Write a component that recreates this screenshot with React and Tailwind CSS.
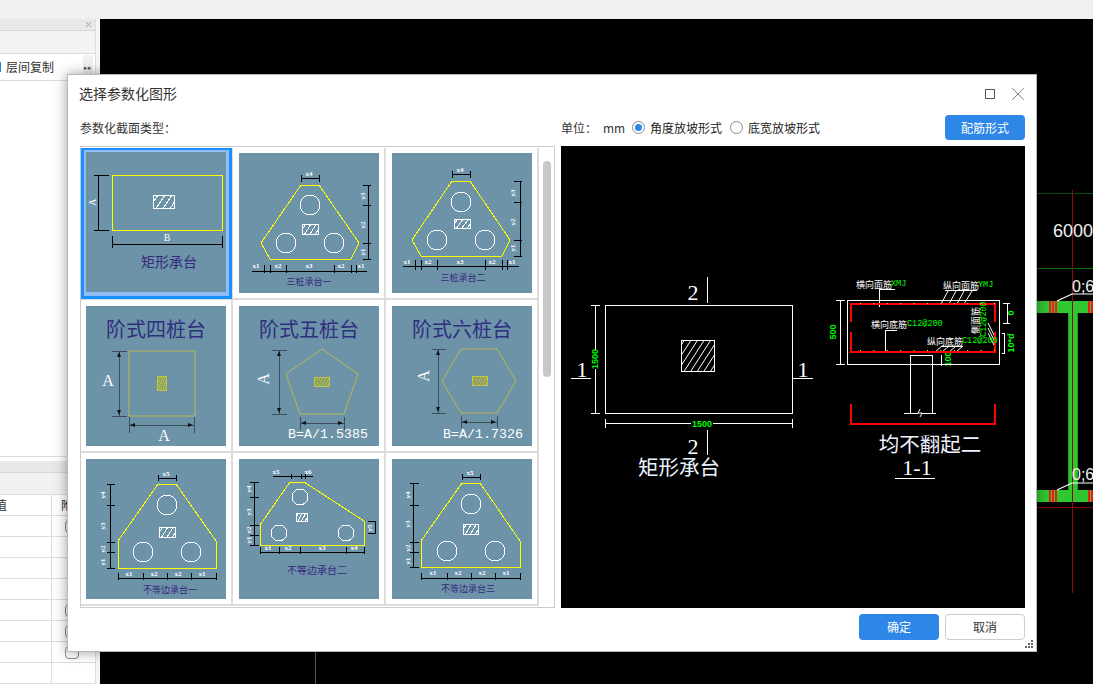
import { X } from "lucide-react";

const CJK = "'Noto Sans CJK SC', sans-serif";
const SERIF = "'Liberation Serif', 'Noto Sans CJK SC', serif";
const MONO = "'Liberation Mono', monospace";

// dimension line helpers: [x1, y1, x2, y2]
const hDim = (y, xs, t0, t1, from = xs[0], to = xs[xs.length - 1]) => [
  [from, y, to, y],
  ...xs.map((x) => [x, t0, x, t1]),
];
const vDim = (x, ys, t0, t1, from = ys[0], to = ys[ys.length - 1]) => [
  [x, from, x, to],
  ...ys.map((y) => [t0, y, t1, y]),
];

function Hatch({ x, y, w, h, n = 3, color = "#fff", bg = "none", slant }) {
  const step = w / n;
  const run = slant ?? step * 1.2;
  const before = Math.ceil(run / step);
  return (
    <g stroke={color} strokeWidth="1" fill="none">
      <rect x={x + 0.5} y={y + 0.5} width={w} height={h} fill={bg} />
      <svg x={x} y={y} width={w + 1} height={h + 1}>
        {Array.from({ length: n + before }, (_, i) => {
          const x0 = step * (i - before) + step / 2;
          return <line key={i} x1={x0} y1={h} x2={x0 + run} y2={0} />;
        })}
      </svg>
    </g>
  );
}

function Arrow({ x, y, dir, color = "#111" }) {
  const points = {
    up: `${x},${y} ${x - 2},${y + 5} ${x + 2},${y + 5}`,
    down: `${x},${y} ${x - 2},${y - 5} ${x + 2},${y - 5}`,
    left: `${x},${y} ${x + 5},${y - 2} ${x + 5},${y + 2}`,
    right: `${x},${y} ${x - 5},${y - 2} ${x - 5},${y + 2}`,
  };
  return <polygon points={points[dir]} fill={color} />;
}

function PileThumb({ poly, circles = [], r = 10, hatch, dims, labels, title }) {
  return (
    <svg className="block h-[140px] w-[140px] bg-[#6d93a9]" viewBox="0 0 140 140" shapeRendering="crispEdges">
      <polygon points={poly} fill="none" stroke="#ffff00" strokeWidth="1" />
      {circles.map(([cx, cy]) => (
        <circle key={cx + "-" + cy} cx={cx} cy={cy} r={r} fill="none" stroke="#fff" strokeWidth="1" />
      ))}
      <Hatch {...hatch} />
      <g stroke="#000" strokeWidth="1">
        {dims.map(([x1, y1, x2, y2], i) => (
          <line key={i} x1={x1} y1={y1} x2={x2} y2={y2} />
        ))}
      </g>
      <g fill="#fff" fontFamily={SERIF} fontSize="7" fontWeight="700" textAnchor="middle" dominantBaseline="central">
        {labels.map(([t, x, y, rot], i) => (
          <text key={i} x={x} y={y} transform={rot ? `rotate(-90 ${x} ${y})` : undefined}>
            {t}
          </text>
        ))}
      </g>
      <text
        x={title.x}
        y={title.y}
        fill="#35287c"
        fontFamily={CJK}
        fontSize={title.size || 9}
        textAnchor="middle"
        dominantBaseline="central"
      >
        {title.text}
      </text>
    </svg>
  );
}

function RectThumb() {
  return (
    <svg className="block h-[140px] w-[140px] bg-[#6d93a9]" viewBox="0 0 140 140" shapeRendering="crispEdges">
      <rect x="26.5" y="23.5" width="110" height="55" fill="none" stroke="#ffff00" strokeWidth="1" />
      <Hatch x={67} y={43} w={21} h={13} n={3} />
      <g stroke="#000" strokeWidth="1">
        <line x1="12" y1="23" x2="12" y2="78" />
        <line x1="8" y1="23" x2="23" y2="23" />
        <line x1="8" y1="78" x2="23" y2="78" />
        <line x1="26" y1="92" x2="137" y2="92" />
        <line x1="26" y1="84" x2="26" y2="96" />
        <line x1="136" y1="84" x2="136" y2="96" />
      </g>
      <text x="6" y="50" transform="rotate(-90 6 50)" fill="#fff" fontFamily={SERIF} fontSize="10" textAnchor="middle" dominantBaseline="central">
        A
      </text>
      <text x="81" y="85" fill="#fff" fontFamily={SERIF} fontSize="10" textAnchor="middle" dominantBaseline="central">
        B
      </text>
      <text x="83" y="109" fill="#35287c" fontFamily={CJK} fontSize="14" textAnchor="middle" dominantBaseline="central">
        矩形承台
      </text>
    </svg>
  );
}

function StepThumb({ title, shape, hatch, left, bottom, aLeft, aBottom, formula }) {
  const line = "#3d4d5c";
  return (
    <svg className="block h-[140px] w-[140px] bg-[#6d93a9]" viewBox="0 0 140 140">
      <text x="70" y="22" fill="#2f2f7e" fontFamily={CJK} fontSize="20" textAnchor="middle" dominantBaseline="central">
        {title}
      </text>
      <polygon points={shape} fill="none" stroke="#b7ba52" strokeWidth="1" />
      <Hatch {...hatch} color="#c4c43e" bg="#7f9a72" slant={5} />
      <g stroke={line} strokeWidth="1" shapeRendering="crispEdges">
        <line x1={left.x} y1={left.y0} x2={left.x} y2={left.y1} />
        <line x1={left.t0} y1={left.y0} x2={left.t1} y2={left.y0} />
        <line x1={left.t0} y1={left.y1} x2={left.t1} y2={left.y1} />
        <line x1={bottom.x0} y1={bottom.y} x2={bottom.x1} y2={bottom.y} />
        <line x1={bottom.x0} y1={bottom.t0} x2={bottom.x0} y2={bottom.t1} />
        <line x1={bottom.x1} y1={bottom.t0} x2={bottom.x1} y2={bottom.t1} />
      </g>
      <Arrow x={left.x} y={left.y0 + 1} dir="up" />
      <Arrow x={left.x} y={left.y1 - 1} dir="down" />
      <Arrow x={bottom.x0 + 1} y={bottom.y} dir="left" />
      <Arrow x={bottom.x1 - 1} y={bottom.y} dir="right" />
      <text
        x={aLeft.x}
        y={aLeft.y}
        transform={aLeft.rot ? `rotate(-90 ${aLeft.x} ${aLeft.y})` : undefined}
        fill="#fff"
        fontFamily={SERIF}
        fontSize="16"
        textAnchor="middle"
        dominantBaseline="central"
      >
        A
      </text>
      {aBottom && (
        <text x={aBottom.x} y={aBottom.y} fill="#fff" fontFamily={SERIF} fontSize="16" textAnchor="middle" dominantBaseline="central">
          A
        </text>
      )}
      {formula && (
        <text x={formula.x} y={formula.y} fill="#fff" fontFamily={MONO} fontSize="13.3" textAnchor="middle" dominantBaseline="central">
          {formula.text}
        </text>
      )}
    </svg>
  );
}

const cells = [
  { key: "rect", selected: true, thumb: <RectThumb /> },
  {
    key: "t1",
    thumb: (
      <PileThumb
        poly="62,32 80,32 120,90 112,106 31,106 22,90"
        circles={[[71, 52], [47, 90], [95, 90]]}
        hatch={{ x: 63, y: 71, w: 16, h: 10 }}
        dims={[
          ...hDim(25, [62, 80], 22, 29),
          ...vDim(129, [32, 52, 90, 106], 124, 132),
          ...hDim(118, [25, 31, 47, 95, 112, 117], 112, 120, 13, 128),
        ]}
        labels={[
          ["x4", 70, 21], ["y3", 124, 43, 1], ["y2", 124, 72, 1], ["y1", 124, 99, 1],
          ["x1", 17, 113], ["x2", 39, 113], ["x3", 70, 113], ["x2", 102, 113], ["x1", 122, 113],
        ]}
        title={{ text: "三桩承台一", x: 70, y: 128 }}
      />
    ),
  },
  {
    key: "t2",
    thumb: (
      <PileThumb
        poly="60,28 78,28 118,87 110,103 29,103 20,87"
        circles={[[69, 49], [45, 87], [93, 87]]}
        hatch={{ x: 62, y: 66, w: 16, h: 9 }}
        dims={[
          ...hDim(21, [60, 78], 18, 25),
          ...vDim(128, [28, 49, 87, 103], 122, 130),
          ...hDim(113, [23, 29, 45, 93, 110, 115], 107, 117, 11, 127),
        ]}
        labels={[
          ["x4", 68, 17], ["y3", 121, 40, 1], ["y2", 121, 69, 1], ["y1", 121, 95, 1],
          ["x1", 15, 109], ["x2", 36, 109], ["x3", 68, 109], ["x2", 100, 109], ["x1", 120, 109],
        ]}
        title={{ text: "三桩承台二", x: 71, y: 124 }}
      />
    ),
  },
  {
    key: "s4",
    thumb: (
      <StepThumb
        title="阶式四桩台"
        shape="43,45 109,45 109,110 43,110"
        hatch={{ x: 71, y: 70, w: 9, h: 14, n: 4 }}
        left={{ x: 33, y0: 45, y1: 110, t0: 26, t1: 41 }}
        bottom={{ y: 119, x0: 43, x1: 108, t0: 111, t1: 127 }}
        aLeft={{ x: 22, y: 74 }}
        aBottom={{ x: 78, y: 129 }}
      />
    ),
  },
  {
    key: "s5",
    thumb: (
      <StepThumb
        title="阶式五桩台"
        shape="83,43 119,68 105,108 61,108 47,68"
        hatch={{ x: 75, y: 71, w: 15, h: 9, n: 5 }}
        left={{ x: 40, y0: 44, y1: 108, t0: 33, t1: 48 }}
        bottom={{ y: 117, x0: 61, x1: 105, t0: 111, t1: 124 }}
        aLeft={{ x: 24, y: 73, rot: 1 }}
        formula={{ text: "B=A/1.5385", x: 89, y: 128 }}
      />
    ),
  },
  {
    key: "s6",
    thumb: (
      <StepThumb
        title="阶式六桩台"
        shape="50,75 69,43 105,43 124,75 105,107 69,107"
        hatch={{ x: 80, y: 70, w: 15, h: 9, n: 5 }}
        left={{ x: 46, y0: 43, y1: 107, t0: 40, t1: 54 }}
        bottom={{ y: 116, x0: 69, x1: 105, t0: 110, t1: 122 }}
        aLeft={{ x: 31, y: 70, rot: 1 }}
        formula={{ text: "B=A/1.7326", x: 91, y: 128 }}
      />
    ),
  },
  {
    key: "u1",
    thumb: (
      <PileThumb
        poly="72,25 90,25 130,82 130,109 32,109 32,82"
        circles={[[81, 46], [57, 93], [105, 93]]}
        hatch={{ x: 73, y: 68, w: 16, h: 10 }}
        dims={[
          ...hDim(19, [72, 90], 16, 22),
          ...vDim(24, [25, 46, 83, 93, 109], 21, 29),
          ...hDim(119, [32, 57, 81, 105, 130], 114, 121),
        ]}
        labels={[
          ["x5", 80, 15], ["y4", 17, 36, 1], ["y3", 17, 67, 1], ["y2", 17, 90, 1], ["y1", 17, 103, 1],
          ["x1", 43, 115], ["x2", 68, 115], ["x2", 92, 115], ["x1", 116, 115],
        ]}
        title={{ text: "不等边承台一", x: 84, y: 130 }}
      />
    ),
  },
  {
    key: "u2",
    thumb: (
      <PileThumb
        poly="51,23 65,23 125,62 125,86 21,86 21,66"
        r={8}
        circles={[[61, 38], [40, 74], [107, 74]]}
        hatch={{ x: 57, y: 54, w: 11, h: 8 }}
        dims={[
          ...hDim(17, [52, 62, 66], 15, 20, 34, 74),
          ...vDim(15, [23, 38, 66, 76, 86], 11, 20),
          [129, 62, 137, 62], [129, 74, 137, 74], [136, 62, 136, 74],
          ...hDim(93, [21, 40, 61, 107, 125], 88, 95),
        ]}
        labels={[
          ["x5", 37, 13], ["x6", 69, 13], ["y4", 10, 30, 1], ["y3", 10, 53, 1], ["y2", 10, 71, 1], ["y1", 10, 81, 1],
          ["y5", 131, 69, 1], ["x1", 29, 89], ["x2", 49, 89], ["x3", 83, 89], ["x4", 115, 89],
        ]}
        title={{ text: "不等边承台二", x: 78, y: 110, size: 10 }}
      />
    ),
  },
  {
    key: "u3",
    thumb: (
      <PileThumb
        poly="70,24 88,24 128,82 128,108 29,108 29,82"
        circles={[[79, 45], [55, 92], [103, 92]]}
        hatch={{ x: 71, y: 65, w: 15, h: 10 }}
        dims={[
          ...hDim(18, [70, 88], 15, 21),
          ...vDim(21, [24, 46, 83, 93, 108], 18, 27),
          ...hDim(119, [29, 55, 79, 103, 128], 114, 121),
        ]}
        labels={[
          ["x5", 78, 14], ["y4", 16, 36, 1], ["y3", 16, 65, 1], ["y2", 16, 89, 1], ["y1", 16, 102, 1],
          ["x1", 41, 114], ["x2", 66, 114], ["x2", 90, 114], ["x1", 114, 114],
        ]}
        title={{ text: "不等边承台三", x: 76, y: 129 }}
      />
    ),
  },
];

function ThumbList() {
  return (
    <div className="flex h-[462px] w-[475px] overflow-hidden border border-[#cccccc] pt-px">
      <div className="flex w-[458px] flex-wrap content-start">
        {cells.map((c, i) => {
          const width = i % 3 === 0 ? "w-[152px] pl-[5px]" : "w-[153px] pl-[6px]";
          const height = i < 3 ? "h-[152px] pt-[5px]" : "h-[153px] pt-[6px]";
          if (c.selected) {
            return (
              <div key={c.key} className="h-[152px] w-[152px] border-b border-r border-b-[#dcdcdc] border-r-[#dcdcdc]">
                <div className="h-[151px] w-[151px] border-[3px] border-[#1890ff] border-t-2 border-r-[3px] bg-[#8fbdf8] pl-[2px] pt-[2px]">
                  {c.thumb}
                </div>
              </div>
            );
          }
          return (
            <div key={c.key} className={`${width} ${height} border-b-2 border-r-2 border-[#dcdcdc]`}>
              {c.thumb}
            </div>
          );
        })}
      </div>
      <div className="pl-1 pt-[13px]">
        <div className="h-[216px] w-2 rounded-full bg-[#c8c8c8]" />
      </div>
    </div>
  );
}

function Preview() {
  const dotsX = Array.from({ length: 11 }, (_, i) => 860 + i * 13.4);
  return (
    <svg className="block h-[462px] w-[464px] bg-black" viewBox="561 146 464 462">
      <g stroke="#fff" strokeWidth="1" fill="none" shapeRendering="crispEdges">
        <rect x="605.5" y="305.5" width="187" height="108" />
        <line x1="707.5" y1="277" x2="707.5" y2="303" />
        <line x1="707.5" y1="430" x2="707.5" y2="455" />
        <line x1="571" y1="378.5" x2="591" y2="378.5" />
        <line x1="793" y1="378.5" x2="813" y2="378.5" />
        <line x1="595.5" y1="305" x2="595.5" y2="350" />
        <line x1="595.5" y1="369" x2="595.5" y2="414" />
        <line x1="591" y1="305.5" x2="600" y2="305.5" />
        <line x1="591" y1="413.5" x2="600" y2="413.5" />
        <line x1="605" y1="423.5" x2="691" y2="423.5" />
        <line x1="713" y1="423.5" x2="793" y2="423.5" />
        <line x1="605.5" y1="419" x2="605.5" y2="428" />
        <line x1="792.5" y1="419" x2="792.5" y2="428" />
      </g>
      <Hatch x={681} y={340} w={33} h={31} n={5} slant={20} />
      <g fill="#fff" fontFamily={SERIF} fontSize="22" textAnchor="middle" dominantBaseline="central">
        <text x="693" y="292">2</text>
        <text x="693" y="446">2</text>
        <text x="582" y="369">1</text>
        <text x="803" y="369">1</text>
      </g>
      <g fill="#00ff00" fontFamily="'Liberation Sans', sans-serif" fontWeight="700" fontSize="9" textAnchor="middle" dominantBaseline="central">
        <text x="595" y="359" transform="rotate(-90 595 359)">1500</text>
        <text x="702" y="424">1500</text>
        <text x="833" y="332" transform="rotate(-90 833 332)">500</text>
        <text x="1011" y="313" transform="rotate(-90 1011 313)">0</text>
        <text x="1011" y="343" transform="rotate(-90 1011 343)">10*d</text>
        <text x="948" y="359" transform="rotate(-90 948 359)">100</text>
      </g>
      <text x="679" y="466" fill="#eaf4ff" fontFamily={CJK} fontSize="20.5" textAnchor="middle" dominantBaseline="central">
        矩形承台
      </text>

      {/* section 1-1 */}
      <g stroke="#fff" strokeWidth="1" fill="none" shapeRendering="crispEdges">
        <rect x="847.5" y="300.5" width="152" height="64" />
        <line x1="840.5" y1="300" x2="840.5" y2="365" />
        <line x1="836" y1="300.5" x2="845" y2="300.5" />
        <line x1="836" y1="364.5" x2="845" y2="364.5" />
        <line x1="1007.5" y1="303" x2="1007.5" y2="323" />
        <line x1="1003" y1="303.5" x2="1010" y2="303.5" />
        <line x1="1003" y1="323.5" x2="1010" y2="323.5" />
        <line x1="1002" y1="333.5" x2="1005" y2="333.5" />
        <line x1="1004.5" y1="333" x2="1004.5" y2="353" />
        <line x1="1002" y1="353.5" x2="1005" y2="353.5" />
        <line x1="910.5" y1="355" x2="910.5" y2="413" />
        <line x1="932.5" y1="355" x2="932.5" y2="413" />
        <line x1="910" y1="355.5" x2="933" y2="355.5" />
        <line x1="904" y1="413.5" x2="918" y2="413.5" />
        <line x1="922" y1="413.5" x2="936" y2="413.5" />
        <line x1="895" y1="478.5" x2="935" y2="478.5" />
        <line x1="879.5" y1="289" x2="879.5" y2="307" />
        <line x1="879" y1="289.5" x2="895" y2="289.5" />
        <line x1="885.5" y1="330" x2="885.5" y2="353" />
        <line x1="885" y1="330.5" x2="897" y2="330.5" />
        <line x1="945" y1="290.5" x2="977" y2="290.5" />
        <line x1="942" y1="346.5" x2="963" y2="346.5" />
        <line x1="941" y1="355" x2="941" y2="366" />
      </g>
      <g stroke="#fff" strokeWidth="1" fill="none">
        <path d="M920 409 L918 413 L922 413 L920 417" />
        <path d="M948 291 L941 304 M956 291 L949 304 M964 291 L957 304 M972 291 L964 304" />
        <path d="M942 346 L935 352 M949 346 L942 352 M956 346 L949 352 M963 346 L956 352" />
        <path d="M988 323 L995 337 M988 328 L995 342 M988 333 L995 347" />
      </g>
      <g fill="#ff0000">
        <rect x="850" y="303" width="146" height="2" />
        <rect x="850" y="351" width="146" height="2" />
        <rect x="850" y="303" width="2" height="19" />
        <rect x="850" y="332" width="2" height="21" />
        <rect x="994" y="303" width="2" height="19" />
        <rect x="994" y="332" width="2" height="21" />
        <rect x="850" y="404" width="2" height="20" />
        <rect x="994" y="404" width="2" height="20" />
        <rect x="850" y="423" width="146" height="2" />
      </g>
      <g fill="#ffff00">
        {dotsX.map((x) => (
          <g key={x}>
            <rect x={x} y="303" width="1" height="1" />
            <rect x={x} y="350" width="1" height="1" />
          </g>
        ))}
      </g>
      <g fill="#fff" fontFamily={CJK} fontSize="9" dominantBaseline="central">
        <text x="856" y="284">横向面筋</text>
        <text x="943" y="285">纵向面筋</text>
        <text x="871" y="324">横向底筋</text>
        <text x="927" y="341">纵向底筋</text>
        <text x="975" y="334" transform="rotate(-90 975 334)">侧面筋</text>
      </g>
      <g fill="#00ff00" fontFamily={MONO} fontSize="8.5" dominantBaseline="central">
        <text x="891" y="284">XMJ</text>
        <text x="978" y="285">YMJ</text>
        <text x="907" y="324">C12@200</text>
        <text x="962" y="341">C12@200</text>
        <text x="984" y="337" transform="rotate(-90 984 337)">C12@200</text>
      </g>
      <text x="930" y="443" fill="#eef2ff" fontFamily={CJK} fontSize="20.5" textAnchor="middle" dominantBaseline="central">
        均不翻起二
      </text>
      <text x="917" y="467" fill="#fff" fontFamily={SERIF} fontSize="22" textAnchor="middle" dominantBaseline="central">
        1-1
      </text>
    </svg>
  );
}

function Radio({ checked, label }) {
  return (
    <label className="flex items-center gap-[5px] text-[12px] text-[#222222]">
      <span className="flex size-[13px] items-center justify-center rounded-full border border-[#8a8a8a] bg-white">
        {checked && <span className="size-[7px] rounded-full bg-[#2e86e6]" />}
      </span>
      {label}
    </label>
  );
}

function Dialog() {
  return (
    <div className="absolute left-[67px] top-[74px] flex h-[578px] w-[970px] flex-col border border-[#b9b9b9] bg-white shadow-[0_0_12px_rgba(0,0,0,0.4)]">
      <div className="flex h-[34px] items-center pl-[11px] pr-[7px] pt-[3px] text-[14px] text-[#333333]">
        <span className="flex-1">选择参数化图形</span>
        <span className="mr-[12px] size-[10px] border border-[#555555]" />
        <X className="size-[22px] text-[#777777]" strokeWidth={1} />
      </div>
      <div className="flex h-[37px] items-center pl-[12px] pr-[11px] text-[12px] text-[#333333]">
        <span className="w-[481px]">参数化截面类型：</span>
        <span className="w-[42px]">单位：</span>
        <span className="w-[29px]">mm</span>
        <div className="flex gap-[8px]">
          <Radio checked label="角度放坡形式" />
          <Radio label="底宽放坡形式" />
        </div>
        <button className="ml-auto h-[25px] w-[80px] rounded bg-[#2e86e6] text-[12px] text-white">配筋形式</button>
      </div>
      <div className="flex gap-[6px] pl-[12px]">
        <ThumbList />
        <Preview />
      </div>
      <div className="relative flex flex-1 items-start justify-end gap-[6px] pr-[11px] pt-[6px] text-[12px]">
        <button className="h-[26px] w-[80px] rounded bg-[#2e86e6] text-white">确定</button>
        <button className="h-[26px] w-[80px] rounded border border-[#cccccc] bg-white text-[#333333]">取消</button>
        <svg className="absolute bottom-[2px] right-[2px] size-[9px]" viewBox="0 0 9 9" fill="#666666">
          <rect x="6" y="0" width="2" height="2" />
          <rect x="3" y="3" width="2" height="2" />
          <rect x="6" y="3" width="2" height="2" />
          <rect x="0" y="6" width="2" height="2" />
          <rect x="3" y="6" width="2" height="2" />
          <rect x="6" y="6" width="2" height="2" />
        </svg>
      </div>
    </div>
  );
}

const tableRows = [
  { check: true }, {}, {}, {}, { check: true }, { check: true }, { check: true }, {},
];

function LeftPanel() {
  return (
    <div className="flex h-full w-[100px] shrink-0 bg-[#f5f5f5] text-[#333333]">
      <div className="flex w-[96px] flex-col border-r border-[#dddddd] bg-white">
        <div className="flex h-[12px] items-center justify-end border-b border-[#d8d8d8] bg-[#e9e9e9] pr-[2px]">
          <X className="size-[9px] text-[#9a9a9a]" strokeWidth={2.5} />
        </div>
        <div className="h-[23px] border-b border-[#dddddd] bg-[#f3f3f3]" />
        <div className="flex h-[27px] items-center border-b border-[#dddddd]">
          <span className="h-[10px] w-px bg-[#1c86ee]" />
          <span className="ml-[5px] flex-1 text-[12px]">层间复制</span>
          <span className="mr-[2px] flex h-[24px] w-[10px] items-center justify-center rounded-sm bg-[#f0f0f0] text-[7px] text-[#555555]">▸▸</span>
        </div>
        <div className="h-[376px] border-b border-[#dddddd]" />
        <div className="h-[4px]" />
        <div className="h-[12px] border-b border-[#d8d8d8] bg-[#e8e8e8]" />
        <div className="h-[22px] border-b border-[#dddddd] bg-[#f1f1f1]" />
        <div className="flex h-[21px] border-b border-[#dddddd] text-[12px]">
          <div className="flex w-[52px] items-center justify-end overflow-hidden border-r border-[#dddddd] pr-[44px]">
            <span>值</span>
          </div>
          <div className="pl-[9px] leading-[20px]">附</div>
        </div>
        {tableRows.map((row, i) => (
          <div key={i} className="flex h-[21px] shrink-0 border-b border-[#dddddd]">
            <div className="w-[52px] border-r border-[#dddddd]" />
            <div className="flex items-center pl-[13px]">
              {row.check && <span className="h-[13px] w-[14px] rounded-sm border border-[#888888] bg-white" />}
            </div>
          </div>
        ))}
      </div>
    </div>
  );
}

function Rebar({ y }) {
  return (
    <g fill="#ee1c1c">
      <rect x="1049" y={y} width="2" height="12" />
      <rect x="1052" y={y} width="2" height="12" />
      <rect x="1055" y={y} width="2" height="12" />
      <rect x="1088" y={y} width="2" height="12" />
      <rect x="1091" y={y} width="2" height="12" />
    </g>
  );
}

function Canvas() {
  return (
    <svg className="block h-full min-w-0 flex-1 bg-black" viewBox="100 19 993 665">
      <g shapeRendering="crispEdges">
        <line x1="100" y1="193.5" x2="1093" y2="193.5" stroke="#0a4d0a" />
        <line x1="100" y1="268.5" x2="1093" y2="268.5" stroke="#0a7a0a" />
        <rect x="1037" y="301" width="56" height="12" fill="#2fc62f" />
        <rect x="1068" y="313" width="10" height="177" fill="#1f9f1f" />
        <rect x="1069" y="313" width="8" height="177" fill="#2fc62f" />
        <rect x="1037" y="490" width="56" height="12" fill="#2fc62f" />
        <Rebar y={301} />
        <Rebar y={490} />
        <line x1="1037" y1="507.5" x2="1093" y2="507.5" stroke="#7a0808" />
        <line x1="1072.5" y1="190" x2="1072.5" y2="593" stroke="#8a0a0a" />
        <line x1="315.5" y1="652" x2="315.5" y2="684" stroke="#555555" />
      </g>
      <path d="M1057 301 L1072 294 L1093 294 M1057 490 L1072 483 L1093 483" stroke="#fff" fill="none" strokeWidth="1.2" />
      <g fill="#f2f2f2" fontFamily="'Liberation Sans', sans-serif" dominantBaseline="central">
        <text x="1053" y="231" fontSize="18">6000</text>
        <text x="1072" y="286" fontSize="16">0;6</text>
        <text x="1072" y="474" fontSize="16">0;6</text>
      </g>
    </svg>
  );
}

export default function App() {
  return (
    <div className="relative h-[684px] w-[1093px] overflow-hidden bg-[#f0f0f0] font-['Noto_Sans_CJK_SC',sans-serif]">
      <div className="h-[19px] bg-[#f0f0f0]" />
      <div className="flex h-[665px]">
        <LeftPanel />
        <Canvas />
      </div>
      <Dialog />
    </div>
  );
}
